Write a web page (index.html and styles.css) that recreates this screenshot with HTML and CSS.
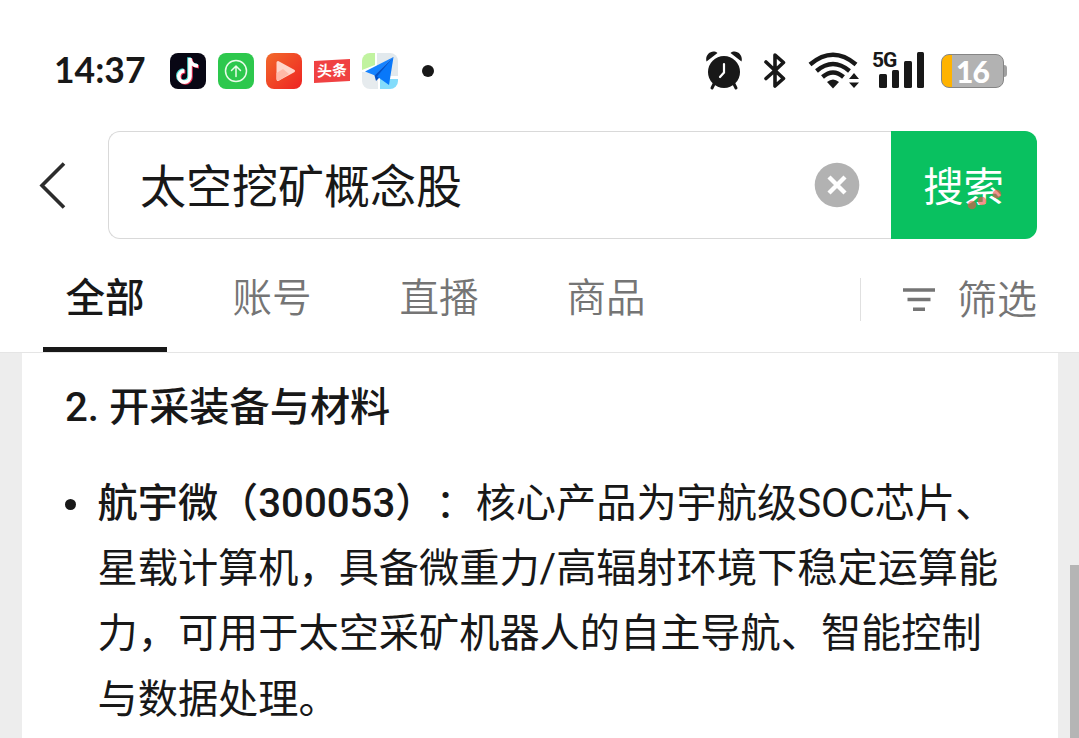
FILE: index.html
```
<!DOCTYPE html>
<html lang="zh-CN">

<head>
    <meta charset="UTF-8">
    <meta name="viewport" content="width=device-width, initial-scale=1.0">
    <title>太空挖矿概念股</title>
    <link rel="stylesheet" href="styles.css">
</head>

<body>
    <div class="status">
        <div class="statusLeft">
            <span class="time">14:37</span>
            <div class="apps">
                <svg class="app" viewBox="0 0 36 36">
                    <rect width="36" height="36" rx="8" fill="#080714" />
                    <g fill="none" stroke-width="3.6">
                        <path d="M20 5v18.500a5.600 5.600 0 1 1-5.600-5.600M20 6.500c.6 3.600 3.500 6.200 8 6.500" stroke="#45ded9" transform="translate(-1 -.8)" />
                        <path d="M20 5v18.500a5.600 5.600 0 1 1-5.600-5.600M20 6.500c.6 3.600 3.500 6.200 8 6.500" stroke="#ee3052" transform="translate(1 .8)" />
                        <path d="M20 5v18.500a5.600 5.600 0 1 1-5.600-5.600M20 6.500c.6 3.600 3.500 6.200 8 6.500" stroke="#fff" />
                    </g>
                </svg>
                <svg class="app" viewBox="0 0 36 36">
                    <rect width="36" height="36" rx="8" fill="#2dc84d" />
                    <g fill="none" stroke="#e9fbe9" stroke-width="1.500" stroke-linecap="round" stroke-linejoin="round">
                        <circle cx="18" cy="18" r="10.500" />
                        <path d="M18 23.500V13M13.500 17.500 18 13l4.500 4.500" />
                    </g>
                </svg>
                <svg class="app" viewBox="0 0 36 36">
                    <defs>
                        <linearGradient id="play" x1="0" y1="0" x2="1" y2="1">
                            <stop offset="0" stop-color="#f26a2b" />
                            <stop offset="1" stop-color="#ee2222" />
                        </linearGradient>
                    </defs>
                    <rect width="36" height="36" rx="8" fill="url(#play)" />
                    <path d="M12 9.500 27.500 18 12 26.500z" fill="#ffd5ca" stroke="#ffd5ca" stroke-width="3" stroke-linejoin="round" />
                    <path d="M10.500 20 17 16l6 5-10 6.500q-2.500.5-2.500-2z" fill="#ffb9a8" />
                </svg>
                <div class="toutiao">头条</div>
                <svg class="app" viewBox="0 0 36 36">
                    <defs>
                        <clipPath id="mapClip"><rect width="36" height="36" rx="8" /></clipPath>
                    </defs>
                    <g clip-path="url(#mapClip)">
                        <rect width="36" height="36" fill="#fff" />
                        <path d="M0 0h13v12L0 17z" fill="#c1f3a0" />
                        <path d="M15 0h21v23H15z" fill="#e2e9ed" />
                        <path d="M0 19h16v17H0z" fill="#e6ebee" />
                        <path d="M18 26h18v10H18z" fill="#83dcfb" />
                    </g>
                    <path d="M31.500 4 3 18.500l10 4z" fill="#1683ff" />
                    <path d="M31.500 4 12.500 22.500 14 28l4-4z" fill="#0552c7" />
                    <path d="M31.500 4 15 23.500 27 32z" fill="#0878fa" />
                </svg>
            </div>
            <span class="moreDot"></span>
        </div>
        <div class="statusRight">
            <svg class="alarm" width="38" height="40" viewBox="0 0 38 40">
                <circle cx="19" cy="21" r="16" fill="#181818" />
                <path d="M1.500 10.500C-.5 4 7-2.500 12.500 2zM36.500 10.500C38.500 4 31-2.500 25.500 2z" fill="#181818" />
                <path d="M9 33 7 37M29 33l2 4" stroke="#181818" stroke-width="3" stroke-linecap="round" />
                <path d="M19 13v8.500l-4 4.500" fill="none" stroke="#fff" stroke-width="2.200" stroke-linecap="round" />
            </svg>
            <svg class="bluetooth" width="22" height="38" viewBox="0 0 22 38">
                <path d="M2 10 11 18.500 19.500 26.500 11 34V3l8.500 7.500L11 18.500 2 26.500" fill="none" stroke="#181818" stroke-width="3.600" stroke-linecap="round" stroke-linejoin="round" />
            </svg>
            <svg class="wifi" width="52" height="38" viewBox="0 0 52 38">
                <g fill="none" stroke="#181818" stroke-width="4.400">
                    <path d="M2 12.500Q25 -7 48 12.500" />
                    <path d="M8.500 19Q25 5 41.500 19" />
                    <path d="M14.500 25Q25 16 35.500 25" />
                </g>
                <path d="M19 30q6-5 12 0l-6 6.500z" fill="#181818" />
                <path d="M41 27h10l-5-6zM41 30.500h10l-5 5.500z" fill="#181818" />
            </svg>
            <div class="signal">
                <span class="net">5G</span>
                <i class="bar b1"></i>
                <i class="bar b2"></i>
                <i class="bar b3"></i>
                <i class="bar b4"></i>
            </div>
            <div class="battery"><span>16</span></div>
            <i class="batteryTip"></i>
        </div>
    </div>

    <div class="searchRow">
        <svg class="back" width="28" height="48" viewBox="0 0 28 48">
            <path d="M25 2.500 3 24.500l22 22" fill="none" stroke="#2c2c2c" stroke-width="3.600" />
        </svg>
        <div class="searchBox">
            <span class="query">太空挖矿概念股</span>
            <svg class="clear" width="46" height="46" viewBox="0 0 46 46">
                <circle cx="23" cy="23" r="22.300" fill="#b2b2b2" />
                <path d="m15 15 16 16M31 15 15 31" stroke="#fff" stroke-width="4.400" />
            </svg>
        </div>
        <div class="searchBtn">
            搜索
            <svg class="dots" width="36" height="22" viewBox="0 0 36 22">
                <g fill="#ef5148" fill-opacity=".62">
                    <circle cx="6" cy="16" r="4.300" />
                    <circle cx="16" cy="12" r="4.300" />
                    <circle cx="31" cy="5" r="4.300" />
                </g>
            </svg>
        </div>
    </div>

    <div class="tabs">
        <div class="tab active">全部</div>
        <div class="tab">账号</div>
        <div class="tab">直播</div>
        <div class="tab">商品</div>
        <div class="filter">
            <svg width="32" height="24" viewBox="0 0 32 24">
                <path d="M0 2h32M4.500 11.500h23M10 21.200h12" stroke="#757575" stroke-width="3.600" />
            </svg>
            <span>筛选</span>
        </div>
    </div>

    <div class="content">
        <div class="card">
            <h2>2. 开采装备与材料</h2>
            <ul>
                <li>
                    <p><b>航宇微（300053）</b>：核心产品为宇航级SOC芯片、</p>
                    <p>星载计算机，具备微重力/高辐射环境下稳定运算能</p>
                    <p>力，可用于太空采矿机器人的自主导航、智能控制</p>
                    <p>与数据处理。</p>
                </li>
            </ul>
        </div>
        <div class="scrollbar"></div>
    </div>
</body>

</html>
```
FILE: styles.css
```
* {
    margin: 0;
    padding: 0;
    box-sizing: border-box;
}

body {
    width: 1079px;
    height: 738px;
    overflow: hidden;
    display: flex;
    flex-direction: column;
    background-color: #fff;
    color: #181818;
    font-family: Roboto, "Noto Sans CJK SC", sans-serif;
    white-space: nowrap;
    text-spacing-trim: space-all;
}

svg {
    display: block;
    flex: none;
}

/* status bar */
.status {
    height: 131px;
    padding: 46px 72px 35px 54px;
    display: flex;
    justify-content: space-between;
    align-items: center;
}

.statusLeft,
.statusRight,
.apps {
    display: flex;
    align-items: center;
}

.time {
    width: 116px;
    padding-bottom: 3px;
    font-family: Lato, sans-serif;
    font-size: 35.5px;
    font-weight: 700;
    line-height: 47px;
}

.apps {
    gap: 12px;
}

.app {
    width: 36px;
    height: 36px;
}

.toutiao {
    width: 36px;
    height: 22px;
    background-color: #f04142;
    color: #fff;
    font-size: 15px;
    font-weight: 700;
    line-height: 22px;
    text-align: center;
    transform: skewY(-3deg);
}

.moreDot {
    width: 12px;
    height: 12px;
    margin-left: 24px;
    border-radius: 50%;
    background-color: #181818;
}

.bluetooth {
    margin-left: 21px;
}

.wifi {
    margin-left: 22px;
}

.signal {
    position: relative;
    height: 38px;
    padding-bottom: 2px;
    margin-left: 19px;
    display: flex;
    align-items: flex-end;
    gap: 5px;
}

.net {
    position: absolute;
    left: -7px;
    top: -3px;
    font-size: 21px;
    font-weight: 700;
    line-height: 22px;
    letter-spacing: -1px;
}

.bar {
    width: 7.5px;
    border-radius: 1.5px;
    background-color: #181818;
}

.b1 {
    height: 14px;
}

.b2 {
    height: 18px;
}

.b3 {
    height: 27px;
}

.b4 {
    height: 36px;
}

.battery {
    width: 63px;
    height: 34px;
    margin-left: 17px;
    border: 1px solid #858585;
    border-radius: 8px;
    background: linear-gradient(90deg, #ffb300 10px, #b2b2b2 10px);
    color: #fff;
    font-family: Lato, sans-serif;
    font-size: 30px;
    font-weight: 900;
    line-height: 33px;
    letter-spacing: -1px;
    text-align: center;
}

.batteryTip {
    width: 3px;
    height: 12px;
    border-radius: 0 3px 3px 0;
    background-color: #a0a0a0;
}

/* search */
.searchRow {
    height: 108px;
    padding: 0 42px 0 39px;
    display: flex;
    align-items: center;
}

.searchBox {
    width: 783px;
    height: 108px;
    margin-left: 41px;
    padding: 0 31px;
    display: flex;
    align-items: center;
    justify-content: space-between;
    border: 1px solid #d9d9d9;
    border-right: 0;
    border-radius: 12px 0 0 12px;
}

.query {
    font-size: 46px;
    line-height: 104px;
    padding-top: 4px;
}

.searchBtn {
    position: relative;
    width: 146px;
    height: 108px;
    padding-top: 3px;
    padding-right: 1px;
    border-radius: 0 12px 12px 0;
    background-color: #09c160;
    color: #fff;
    font-size: 40.3px;
    line-height: 108px;
    text-align: center;
}

.dots {
    position: absolute;
    left: 75px;
    top: 58px;
}

/* tabs */
.tabs {
    height: 114px;
    padding: 0 42px 0 43px;
    display: flex;
    border-bottom: 1px solid #e5e5e5;
}

.tab {
    width: 124px;
    height: 113px;
    margin-right: 43px;
    color: #757575;
    font-size: 39.5px;
    font-weight: 350;
    line-height: 119px;
    text-align: center;
}

.active {
    color: #181818;
    font-weight: 500;
    border-bottom: 5px solid #181818;
}

.filter {
    height: 43px;
    margin: 39px 0 0 auto;
    padding-left: 42px;
    display: flex;
    align-items: center;
    gap: 22px;
    border-left: 1px solid #e0e0e0;
    color: #757575;
    font-size: 40px;
    font-weight: 350;
    line-height: 43px;
}

.filter span {
    padding-top: 2px;
}

/* result */
.content {
    flex: 1;
    display: flex;
    justify-content: space-between;
    padding-left: 22px;
    background-color: #ededed;
}

.card {
    width: 1036px;
    padding: 22px 0 0 43px;
    background-color: #fff;
}

.card h2 {
    font-size: 40.2px;
    font-weight: 500;
    line-height: 65px;
}

.card ul {
    margin-top: 31px;
    list-style: none;
}

.card li {
    position: relative;
    padding-left: 32.5px;
    font-size: 40.2px;
    line-height: 65.2px;
}

.card li::before {
    content: "";
    position: absolute;
    left: 0;
    top: 28px;
    width: 11px;
    height: 11px;
    border-radius: 50%;
    background-color: #181818;
}

.card b {
    font-weight: 500;
}

.scrollbar {
    width: 9px;
    height: 173px;
    margin-top: 212px;
    background-color: #b5b5b5;
}
```
